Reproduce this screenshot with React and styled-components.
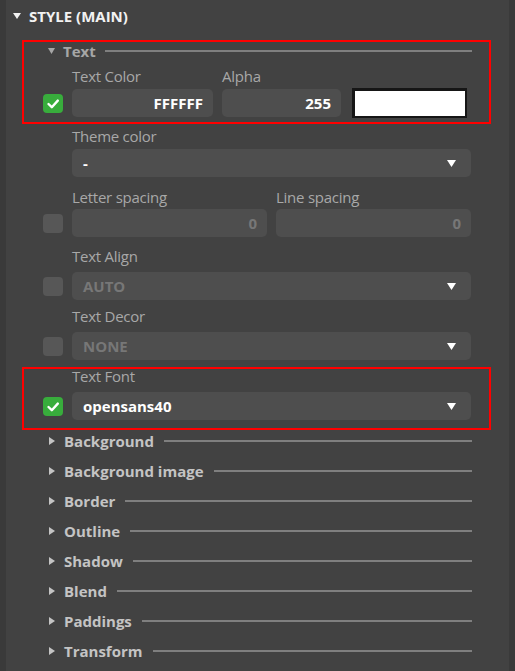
import React from 'react';
import styled, { createGlobalStyle } from 'styled-components';

const Global = createGlobalStyle`
  html, body { margin: 0; padding: 0; background: #424242; }
  body { font-family: "Open Sans", "Noto Sans", sans-serif; }
  * { box-sizing: border-box; }
`;

const Panel = styled.div`
  width: 515px;
  height: 671px;
  background: #424242;
  border-left: 6px solid #3a3a3a;
  border-right: 6px solid #3a3a3a;
  overflow: hidden;
  display: flex;
  flex-direction: column;
`;

const Header = styled.div`
  display: flex;
  align-items: center;
  gap: 8px;
  height: 18px;
  margin: 7px 0 17px;
  padding-left: 7px;
  color: #f2f2f2;
  font-weight: 700;
  font-size: 15px;
  line-height: 18px;
`;

const Body = styled.div`
  display: flex;
  flex-direction: column;
  padding: 0 20px 0 18px;
`;

const Group = styled.div`
  margin-top: ${p => p.$top || 0}px;
  outline: ${p => (p.$hl ? '2px solid #ff0000' : 'none')};
  display: flex;
  flex-direction: column;
`;

const SectionHeader = styled.div`
  display: flex;
  align-items: center;
  height: ${p => (p.$open ? 18 : 22)}px;
  padding-left: ${p => (p.$open ? 24 : 25)}px;
  padding-right: 17px;
  gap: ${p => (p.$open ? 8 : 9)}px;
`;

const SectionTitle = styled.span`
  font-weight: 700;
  font-size: 15px;
  line-height: 18px;
  color: ${p => (p.$open ? '#a6a6a6' : '#c4c4c4')};
  white-space: nowrap;
`;

const Rule = styled.div`
  flex: 1;
  height: 2px;
  margin-left: 1px;
  background: #7f7f7f;
`;

const FieldBlock = styled.div`
  display: grid;
  grid-template-columns: 20px ${p => p.$cols || '1fr'};
  column-gap: 9px;
  row-gap: ${p => p.$gap}px;
  padding: ${p => p.$pt || 0}px 18px ${p => p.$pb || 0}px 19px;
  align-items: center;
`;

const Slot = styled.div`
  grid-column: 1;
`;

const Label = styled.div`
  font-size: 15px;
  letter-spacing: -0.25px;
  line-height: 14px;
  color: #a8a8a8;
  white-space: nowrap;
`;

const CheckBox = styled.div`
  grid-column: 1;
  width: 20px;
  height: 19px;
  border-radius: 4px;
  background: ${p => (p.$on ? '#38ad3c' : '#575757')};
  display: flex;
  align-items: center;
  justify-content: center;
`;

const Field = styled.div`
  height: 28px;
  border-radius: 5px;
  background: #4e4e4e;
  display: flex;
  align-items: center;
  justify-content: flex-end;
  padding: 0 10px;
  font-weight: 700;
  font-size: 15px;
  color: ${p => (p.$muted ? '#777777' : '#ffffff')};
`;

const Select = styled.div`
  height: 28px;
  border-radius: 5px;
  background: #4e4e4e;
  display: flex;
  align-items: center;
  justify-content: space-between;
  padding: 0 15px 0 11px;
  font-weight: 700;
  font-size: 15px;
  color: ${p => (p.$muted ? '#777777' : '#ffffff')};
`;

const Swatch = styled.div`
  height: 30px;
  margin: -1px 0 -1px 2px;
  background: ${p => p.$color};
  border: 3px solid #161616;
  border-right-width: 2px;
  border-bottom-width: 2px;
`;

const Sections = styled.div`
  display: flex;
  flex-direction: column;
  gap: 8px;
  margin-top: 2px;
`;

const TriDown = ({ w = 8, h = 6, color }) => (
  <svg width={w} height={h} viewBox={`0 0 ${w} ${h}`} style={{ display: 'block', flex: 'none' }}>
    <polygon points={`0,0 ${w},0 ${w / 2},${h}`} fill={color} />
  </svg>
);

const TriRight = ({ color }) => (
  <svg width="6" height="8" viewBox="0 0 6 8" style={{ display: 'block', flex: 'none' }}>
    <polygon points="0,0 6,4 0,8" fill={color} />
  </svg>
);

const Check = ({ on }) => (
  <CheckBox $on={on}>
    {on && (
      <svg width="20" height="19" viewBox="0 0 20 19">
        <polyline points="5.5,10 8.8,13.2 14.8,6.6" fill="none" stroke="#fff" strokeWidth="2.4" strokeLinecap="round" strokeLinejoin="round" />
      </svg>
    )}
  </CheckBox>
);

const Arrow = () => <TriDown w={9} h={7} color="#ffffff" />;

const collapsed = ['Background', 'Background image', 'Border', 'Outline', 'Shadow', 'Blend', 'Paddings', 'Transform'];

export default function App() {
  return (
    <>
      <Global />
      <Panel>
        <Header>
          <TriDown w={8} h={6} color="#f2f2f2" />
          STYLE (MAIN)
        </Header>
        <Body>
          <Group $hl>
            <SectionHeader $open>
              <TriDown w={7} h={6} color="#a6a6a6" />
              <SectionTitle $open>Text</SectionTitle>
              <Rule />
            </SectionHeader>
            <FieldBlock $cols="141px 119px 117px" $gap={6} $pt={9} $pb={5}>
              <Slot />
              <Label>Text Color</Label>
              <Label>Alpha</Label>
              <div />
              <Check on />
              <Field>FFFFFF</Field>
              <Field>255</Field>
              <Swatch $color="#ffffff" />
            </FieldBlock>
          </Group>

          <Group>
            <FieldBlock $gap={6} $pt={7}>
              <Slot />
              <Label>Theme color</Label>
              <Slot />
              <Select>
                <span>-</span>
                <Arrow />
              </Select>
            </FieldBlock>
          </Group>

          <Group>
            <FieldBlock $cols="1fr 1fr" $gap={5} $pt={13}>
              <Slot />
              <Label>Letter spacing</Label>
              <Label>Line spacing</Label>
              <Check />
              <Field $muted>0</Field>
              <Field $muted>0</Field>
            </FieldBlock>
          </Group>

          <Group>
            <FieldBlock $gap={9} $pt={12}>
              <Slot />
              <Label>Text Align</Label>
              <Check />
              <Select $muted>
                <span>AUTO</span>
                <Arrow />
              </Select>
            </FieldBlock>
          </Group>

          <Group>
            <FieldBlock $gap={9} $pt={9}>
              <Slot />
              <Label>Text Decor</Label>
              <Check />
              <Select $muted>
                <span>NONE</span>
                <Arrow />
              </Select>
            </FieldBlock>
          </Group>

          <Group $hl $top={9}>
            <FieldBlock $gap={9} $pb={8}>
              <Slot />
              <Label>Text Font</Label>
              <Check on />
              <Select>
                <span>opensans40</span>
                <Arrow />
              </Select>
            </FieldBlock>
          </Group>

          <Sections>
            {collapsed.map(name => (
              <SectionHeader key={name}>
                <TriRight color="#c4c4c4" />
                <SectionTitle>{name}</SectionTitle>
                <Rule />
              </SectionHeader>
            ))}
          </Sections>
        </Body>
      </Panel>
    </>
  );
}
